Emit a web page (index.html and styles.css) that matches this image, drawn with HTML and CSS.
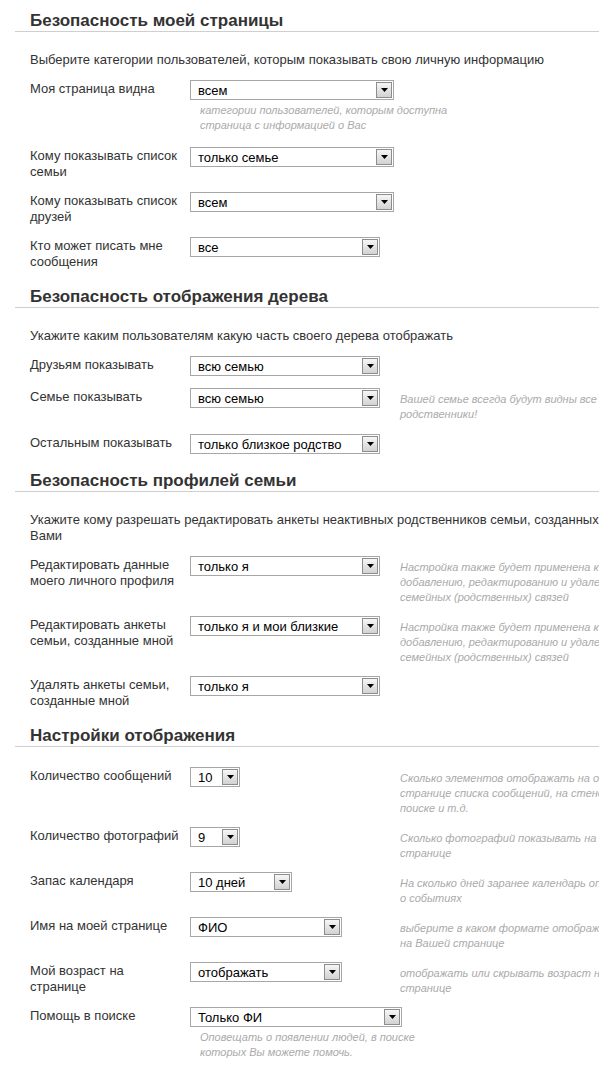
FILE: index.html
```html
<!DOCTYPE html>
<html lang="ru">
<head>
    <meta charset="UTF-8">
    <meta name="viewport" content="width=device-width, initial-scale=1.0">
    <title>Настройки приватности</title>
    <link rel="stylesheet" href="styles.css">
</head>
<body>
<div class="page">

    <!-- Безопасность страницы -->
    <section class="block block-page">
        <h2 class="block-title">Безопасность моей страницы</h2>
        <p class="block-intro">Выберите категории пользователей, которым показывать свою личную информацию</p>

        <div class="row">
            <div class="row-label">Моя страница видна</div>
            <div class="row-field">
                <div class="select w-204"><span class="select-value">всем</span><span class="select-btn"><svg width="7" height="4" viewBox="0 0 7 4"><path d="M0 0h7L3.5 4z"/></svg></span></div>
                <div class="field-hint">категории пользователей, которым доступна страница с информацией о Вас</div>
            </div>
        </div>
        <div class="row">
            <div class="row-label">Кому показывать список семьи</div>
            <div class="row-field">
                <div class="select w-204"><span class="select-value">только семье</span><span class="select-btn"><svg width="7" height="4" viewBox="0 0 7 4"><path d="M0 0h7L3.5 4z"/></svg></span></div>
            </div>
        </div>
        <div class="row">
            <div class="row-label">Кому показывать список друзей</div>
            <div class="row-field">
                <div class="select w-204"><span class="select-value">всем</span><span class="select-btn"><svg width="7" height="4" viewBox="0 0 7 4"><path d="M0 0h7L3.5 4z"/></svg></span></div>
            </div>
        </div>
        <div class="row">
            <div class="row-label">Кто может писать мне сообщения</div>
            <div class="row-field">
                <div class="select w-190"><span class="select-value">все</span><span class="select-btn"><svg width="7" height="4" viewBox="0 0 7 4"><path d="M0 0h7L3.5 4z"/></svg></span></div>
            </div>
        </div>
    </section>

    <!-- Безопасность дерева -->
    <section class="block block-tree">
        <h2 class="block-title">Безопасность отображения дерева</h2>
        <p class="block-intro">Укажите каким пользователям какую часть своего дерева отображать</p>

        <div class="row">
            <div class="row-label">Друзьям показывать</div>
            <div class="row-field">
                <div class="select w-190"><span class="select-value">всю семью</span><span class="select-btn"><svg width="7" height="4" viewBox="0 0 7 4"><path d="M0 0h7L3.5 4z"/></svg></span></div>
            </div>
        </div>
        <div class="row">
            <div class="row-label">Семье показывать</div>
            <div class="row-field">
                <div class="select w-190"><span class="select-value">всю семью</span><span class="select-btn"><svg width="7" height="4" viewBox="0 0 7 4"><path d="M0 0h7L3.5 4z"/></svg></span></div>
            </div>
            <div class="row-hint">Вашей семье всегда будут видны все родственники!</div>
        </div>
        <div class="row">
            <div class="row-label">Остальным показывать</div>
            <div class="row-field">
                <div class="select w-190"><span class="select-value">только близкое родство</span><span class="select-btn"><svg width="7" height="4" viewBox="0 0 7 4"><path d="M0 0h7L3.5 4z"/></svg></span></div>
            </div>
        </div>
    </section>

    <!-- Безопасность профилей -->
    <section class="block block-profiles">
        <h2 class="block-title">Безопасность профилей семьи</h2>
        <p class="block-intro">Укажите кому разрешать редактировать анкеты неактивных родственников семьи, созданных Вами</p>

        <div class="row">
            <div class="row-label">Редактировать данные моего личного профиля</div>
            <div class="row-field">
                <div class="select w-190"><span class="select-value">только я</span><span class="select-btn"><svg width="7" height="4" viewBox="0 0 7 4"><path d="M0 0h7L3.5 4z"/></svg></span></div>
            </div>
            <div class="row-hint">Настройка также будет применена к добавлению, редактированию и удалению семейных (родственных) связей</div>
        </div>
        <div class="row">
            <div class="row-label">Редактировать анкеты семьи, созданные мной</div>
            <div class="row-field">
                <div class="select w-190"><span class="select-value">только я и мои близкие</span><span class="select-btn"><svg width="7" height="4" viewBox="0 0 7 4"><path d="M0 0h7L3.5 4z"/></svg></span></div>
            </div>
            <div class="row-hint">Настройка также будет применена к добавлению, редактированию и удалению семейных (родственных) связей</div>
        </div>
        <div class="row">
            <div class="row-label">Удалять анкеты семьи, созданные мной</div>
            <div class="row-field">
                <div class="select w-190"><span class="select-value">только я</span><span class="select-btn"><svg width="7" height="4" viewBox="0 0 7 4"><path d="M0 0h7L3.5 4z"/></svg></span></div>
            </div>
        </div>
    </section>

    <!-- Отображение -->
    <section class="block block-display">
        <h2 class="block-title">Настройки отображения</h2>

        <div class="row">
            <div class="row-label">Количество сообщений</div>
            <div class="row-field">
                <div class="select w-48"><span class="select-value">10</span><span class="select-btn"><svg width="7" height="4" viewBox="0 0 7 4"><path d="M0 0h7L3.5 4z"/></svg></span></div>
            </div>
            <div class="row-hint">Сколько элементов отображать на одной странице списка сообщений, на стене, в поиске&nbsp;и&nbsp;т.д.</div>
        </div>
        <div class="row">
            <div class="row-label">Количество фотографий</div>
            <div class="row-field">
                <div class="select w-48"><span class="select-value">9</span><span class="select-btn"><svg width="7" height="4" viewBox="0 0 7 4"><path d="M0 0h7L3.5 4z"/></svg></span></div>
            </div>
            <div class="row-hint">Сколько фотографий показывать на одной странице</div>
        </div>
        <div class="row">
            <div class="row-label">Запас календаря</div>
            <div class="row-field">
                <div class="select w-100"><span class="select-value">10 дней</span><span class="select-btn"><svg width="7" height="4" viewBox="0 0 7 4"><path d="M0 0h7L3.5 4z"/></svg></span></div>
            </div>
            <div class="row-hint">На сколько дней заранее календарь оповещает о&nbsp;событиях</div>
        </div>
        <div class="row">
            <div class="row-label">Имя на моей странице</div>
            <div class="row-field">
                <div class="select w-150"><span class="select-value">ФИО</span><span class="select-btn"><svg width="7" height="4" viewBox="0 0 7 4"><path d="M0 0h7L3.5 4z"/></svg></span></div>
            </div>
            <div class="row-hint">выберите в каком формате отображать имя на&nbsp;Вашей странице</div>
        </div>
        <div class="row">
            <div class="row-label">Мой возраст на странице</div>
            <div class="row-field">
                <div class="select w-150"><span class="select-value">отображать</span><span class="select-btn"><svg width="7" height="4" viewBox="0 0 7 4"><path d="M0 0h7L3.5 4z"/></svg></span></div>
            </div>
            <div class="row-hint">отображать или скрывать возраст на Вашей странице</div>
        </div>
        <div class="row">
            <div class="row-label">Помощь в поиске</div>
            <div class="row-field">
                <div class="select w-212"><span class="select-value">Только ФИ</span><span class="select-btn"><svg width="7" height="4" viewBox="0 0 7 4"><path d="M0 0h7L3.5 4z"/></svg></span></div>
                <div class="field-hint">Оповещать о появлении людей, в поиске которых Вы можете помочь.</div>
            </div>
        </div>
    </section>

</div>
</body>
</html>
```

FILE: styles.css
```css
body {
    margin: 0;
    padding: 0;
    background: #fff;
    font-family: "Liberation Sans", Arial, sans-serif;
    color: #333;
    overflow-x: hidden;
}

.page {
    width: 680px;
    padding: 11px 0 0 15px;
}

.block {
    margin-bottom: 17px;
}

.block-title {
    margin: 0 0 20px 0;
    padding-left: 15px;
    font-size: 17px;
    line-height: 20px;
    font-weight: bold;
    color: #333;
    border-bottom: 1px solid #cfcfcf;
}

.block-intro {
    margin: 0 0 12px 0;
    padding-left: 15px;
    font-size: 13px;
    line-height: 16px;
    width: 575px;
}

/* one setting: label | select (+ hint under it) | hint on the right */
.row {
    display: flex;
    align-items: flex-start;
    padding-left: 15px;
    margin-bottom: 12px;
}

.block-profiles .row,
.block-display .row {
    margin-bottom: 11px;
}

.block .row:last-child {
    margin-bottom: 0;
}

.row-label {
    width: 150px;
    margin-right: 10px;
    font-size: 13px;
    line-height: 16px;
    padding-top: 1px;
}

.row-field {
    width: 210px;
    flex-shrink: 0;
}

.row-hint,
.field-hint {
    font-size: 11px;
    line-height: 15px;
    font-style: italic;
    color: #aaa;
}

.row-hint {
    width: 256px;
    padding-top: 4px;
}

.field-hint {
    width: 248px;
    padding: 3px 0 2px 10px;
}

/* old windows-looking dropdown */
.select {
    display: flex;
    align-items: center;
    justify-content: space-between;
    height: 18px;
    border: 1px solid #a7a7a7;
    background: #fff;
}

.select-value {
    padding-left: 7px;
    font-size: 13px;
    color: #000;
    white-space: nowrap;
}

.select-btn {
    display: flex;
    align-items: center;
    justify-content: center;
    width: 14px;
    height: 14px;
    margin-right: 1px;
    border: 1px solid #8d8d8d;
    background: linear-gradient(#f6f6f6, #d2d2d2);
}

.select-btn svg {
    display: block;
}

.w-48 { width: 48px; }
.w-100 { width: 100px; }
.w-150 { width: 150px; }
.w-190 { width: 188px; }
.w-204 { width: 202px; }
.w-212 { width: 210px; }
```
